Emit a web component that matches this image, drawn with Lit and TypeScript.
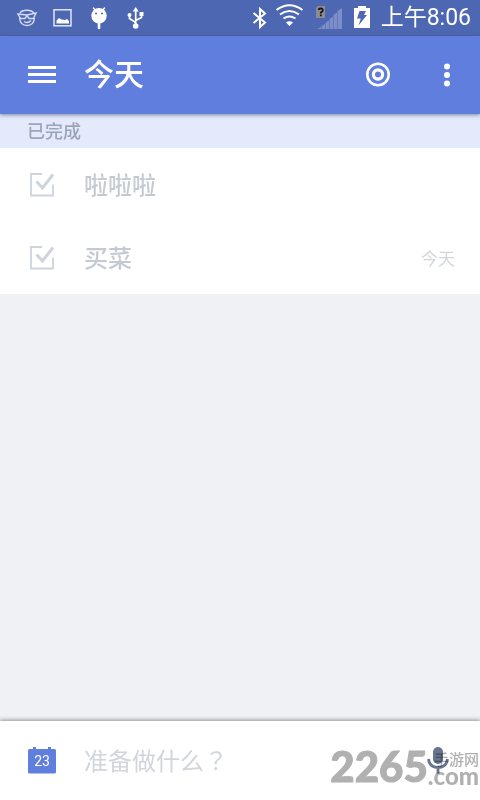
import { LitElement, html, css } from "lit";
import { customElement, property, state } from "lit/decorators.js";

interface Task {
  title: string;
  due?: string;
  done: boolean;
}

@customElement("status-bar")
export class StatusBar extends LitElement {
  static styles = css`
    :host {
      display: flex;
      align-items: center;
      justify-content: space-between;
      height: 36px;
      padding: 0 9px 0 16px;
      background: #4d67b3;
      color: #fff;
    }
    .group {
      display: flex;
      align-items: center;
    }
    .notices {
      gap: 12px;
    }
    svg {
      display: block;
      flex: none;
    }
    .signal {
      margin-left: 8px;
    }
    .battery {
      margin-left: 10px;
    }
    .clock {
      margin-left: 10px;
      font: 23px/36px Roboto, "Noto Sans CJK SC", sans-serif;
      white-space: nowrap;
    }
  `;

  render() {
    return html`
      <div class="group notices">
        <svg width="24" height="36" viewBox="0 0 24 36" fill="none" stroke="#d3dcf3" stroke-width="1.4">
          <path d="M4 13C6 9.500 15 9 18 13M3.500 18C4 23 7 25.500 11 25.500S18 23 18.500 18M8 21.500Q12 24 15 20.500" />
          <path d="M2 14L11 15L20 13L17.500 18.500H13L11 15.500L9 18.500H4.500Z" fill="#4d67b3" />
        </svg>
        <svg width="24" height="36" viewBox="0 0 24 36">
          <rect x="2" y="9.800" width="17" height="16" fill="none" stroke="#dfe6f8" stroke-width="1.500" />
          <path d="M4.500 23.500V20.500L7 18L9.500 19.500L13 20L15 19L17 21V23.500Z" fill="#fff" />
        </svg>
        <svg width="24" height="36" viewBox="0 0 24 36">
          <path d="M5.500 8L8 11M16.500 8L14 11" stroke="#fff" stroke-width="1.400" stroke-linecap="round" />
          <circle cx="11" cy="15.700" r="7.700" fill="#fff" />
          <path d="M11 22V28" stroke="#fff" stroke-width="2.600" stroke-linecap="round" />
          <circle cx="8" cy="13.500" r="1" fill="#4d67b3" />
          <circle cx="14" cy="13.500" r="1" fill="#4d67b3" />
        </svg>
        <svg width="24" height="36" viewBox="0 0 24 36" fill="none" stroke="#fff" stroke-width="1.700">
          <path d="M11.700 10V26M11.700 22.500L5.500 18.500V15M11.700 20.500L17.500 17.500V14" />
          <g fill="#fff" stroke="none">
            <path d="M8.700 11.500L11.700 7L14.700 11.500Z" />
            <circle cx="11.700" cy="26" r="2.800" />
            <circle cx="5.500" cy="15" r="2" />
            <path d="M15.500 12H19.500V16H15.500Z" />
          </g>
        </svg>
      </div>
      <div class="group">
        <svg width="16" height="36" viewBox="0 0 16 36" fill="none" stroke="#fff" stroke-width="2">
          <path d="M1.500 13L13 22.500L8 27V9L13 13.500L1.500 23" />
        </svg>
        <svg width="40" height="36" viewBox="0 0 40 36" fill="none" stroke="#fff" stroke-width="2">
          <path d="M8.500 10Q21.500 .500 34.500 10" />
          <path d="M12 14.500Q21.500 7.500 31 14.500" />
          <path d="M15.500 18.500Q21.500 14.500 27.500 18.500" />
          <path d="M18 22.500Q21.500 20 25 22.500L21.500 26Z" fill="#fff" stroke="none" />
        </svg>
        <svg class="signal" width="27" height="36" viewBox="0 0 27 36">
          <path
            d="M1 29L5 27V29ZM5.500 26L9 24V29H5.500ZM9.500 23L13 20.500V29H9.500ZM13.500 19L17 16.500V29H13.500ZM17.500 15L21 12.500V29H17.500ZM21.500 11L26 8V29H21.500Z"
            fill="#7c8dc7"
          />
          <path d="M2 6H9V18H0V8Z" fill="#8c8c90" />
          <path
            d="M2.600 10Q2.800 8.300 4.700 8.300Q6.800 8.300 6.800 10.200Q6.800 11.500 4.800 12.500V13.600M4.800 14.600V16.200"
            fill="none"
            stroke="#111"
            stroke-width="1.700"
          />
        </svg>
        <svg class="battery" width="18" height="36" viewBox="0 0 18 36">
          <path d="M1 8H5V6H13V8H17V28H1Z" fill="#fff" />
          <path d="M6.500 11H13L11 15H14L5.500 25.500L7.800 18.500H4Z" fill="#4d67b3" />
        </svg>
        <time class="clock">上午8:06</time>
      </div>
    `;
  }
}

@customElement("app-bar")
export class AppBar extends LitElement {
  @property() heading = "";

  static styles = css`
    :host {
      display: flex;
      align-items: center;
      height: 78px;
      padding: 0 9px 0 18px;
      background: #607edd;
      box-shadow: 0 1px 4px rgba(40, 50, 90, 0.55);
      color: #fff;
      position: relative;
      z-index: 1;
    }
    button {
      width: 48px;
      height: 48px;
      padding: 0;
      border: 0;
      background: none;
      flex: none;
    }
    svg {
      display: block;
      margin: auto;
    }
    h1 {
      flex: 1;
      margin: 0 0 6px 18px;
      font: 500 30px/40px "Noto Sans CJK SC", sans-serif;
    }
    .focus {
      margin-right: 21px;
    }
  `;

  render() {
    return html`
      <button aria-label="菜单">
        <svg width="28" height="20" viewBox="0 0 28 20" fill="#fff">
          <path d="M0 1H28V4H0ZM0 8H28V11H0ZM0 15H28V18H0Z" />
        </svg>
      </button>
      <h1>${this.heading}</h1>
      <button class="focus" aria-label="专注">
        <svg width="26" height="26" viewBox="0 0 26 26" fill="none" stroke="#fff">
          <circle cx="13" cy="12.500" r="10.700" stroke-width="2.600" />
          <circle cx="13" cy="12.500" r="4.600" stroke-width="3.200" />
        </svg>
      </button>
      <button aria-label="更多">
        <svg width="8" height="26" viewBox="0 0 8 26" fill="#fff">
          <circle cx="4" cy="4.500" r="3" />
          <circle cx="4" cy="13" r="3" />
          <circle cx="4" cy="21.500" r="3" />
        </svg>
      </button>
    `;
  }
}

@customElement("task-list")
export class TaskList extends LitElement {
  @property() label = "";
  @property({ attribute: false }) tasks: Task[] = [];

  static styles = css`
    :host {
      display: block;
      font-family: "Noto Sans CJK SC", sans-serif;
    }
    h2 {
      margin: 0;
      padding: 0 27px 2px;
      background: #e4eafb;
      color: #9ba5ba;
      font-size: 18px;
      font-weight: 500;
      line-height: 32px;
    }
    ul {
      margin: 0;
      padding: 0;
      list-style: none;
      background: #fff;
    }
    label {
      display: flex;
      align-items: center;
      height: 73px;
      padding: 0 25px 0 29px;
      color: #c4c9d2;
    }
    .box {
      display: grid;
      width: 26px;
      height: 26px;
      margin-right: 29px;
    }
    .box > * {
      grid-area: 1 / 1;
      margin: 0;
    }
    input {
      appearance: none;
    }
    .tick {
      visibility: hidden;
    }
    input:checked + svg .tick {
      visibility: visible;
    }
    .title {
      flex: 1;
      padding-bottom: 2px;
      font-size: 24px;
      font-weight: 500;
      line-height: 36px;
    }
    .due {
      font-size: 17px;
      color: #d3d6dc;
    }
  `;

  private toggle(task: Task) {
    task.done = !task.done;
    this.requestUpdate();
  }

  render() {
    return html`
      <h2>${this.label}</h2>
      <ul>
        ${this.tasks.map(
          (task) => html`
            <li>
              <label>
                <span class="box">
                  <input type="checkbox" .checked=${task.done} @change=${() => this.toggle(task)} />
                  <svg width="26" height="26" viewBox="0 0 26 26" fill="none" stroke="#cfd3de">
                    <path d="M13 2H2V23.500H24V12.500" stroke-width="1.800" />
                    <path class="tick" d="M7.500 9.500L13.500 16L24 2.500" stroke-width="3" />
                  </svg>
                </span>
                <span class="title">${task.title}</span>
                ${task.due ? html`<span class="due">${task.due}</span>` : null}
              </label>
            </li>
          `
        )}
      </ul>
    `;
  }
}

@customElement("quick-add")
export class QuickAdd extends LitElement {
  @property({ type: Number }) day = 1;

  static styles = css`
    :host {
      display: flex;
      align-items: center;
      height: 79px;
      padding: 0 18px;
      background: #fff;
      box-shadow: 0 -1px 4px rgba(0, 0, 0, 0.4);
      position: relative;
    }
    button {
      display: grid;
      place-items: center;
      width: 48px;
      height: 48px;
      padding: 0;
      border: 0;
      background: none;
      flex: none;
    }
    button > * {
      grid-area: 1 / 1;
    }
    .day {
      color: #fff;
      font: 14px/16px Roboto, sans-serif;
    }
    input {
      flex: 1;
      min-width: 0;
      margin: 0 0 2px 18px;
      padding: 0;
      border: 0;
      outline: 0;
      background: none;
      color: #5c6577;
      font: 24px/36px "Noto Sans CJK TC", sans-serif;
    }
    input::placeholder {
      color: #d2d5dc;
      opacity: 1;
    }
    .brand {
      position: absolute;
      right: 1px;
      bottom: 15px;
      display: flex;
      align-items: flex-end;
      color: #b0b0b0;
      font-family: Lato, sans-serif;
      font-weight: 900;
      mix-blend-mode: multiply;
      pointer-events: none;
    }
    .number {
      font-size: 42px;
      line-height: 38px;
      -webkit-text-stroke: 1px #b0b0b0;
    }
    .site {
      display: flex;
      flex-direction: column;
      align-items: flex-end;
      font-size: 24px;
      line-height: 18px;
    }
    .site-name {
      font: 500 15px/16px "Noto Sans CJK SC", sans-serif;
    }
  `;

  render() {
    return html`
      <button aria-label="选择日期">
        <svg width="28" height="28" viewBox="0 0 28 28" fill="#607edd">
          <path
            d="M5 2V.500A1.500 1.500 0 0 1 8 .500V2H20V.500A1.500 1.500 0 0 1 23 .500V2H26.500Q28 2 28 3.500V25Q28 26.500 26.500 26.500H1.500Q0 26.500 0 25V3.500Q0 2 1.500 2Z"
          />
        </svg>
        <span class="day">${this.day}</span>
      </button>
      <input type="text" aria-label="新任务" placeholder="准备做什么？" />
      <button aria-label="语音输入">
        <svg width="22" height="28" viewBox="0 0 22 28">
          <rect x="6" y="0" width="10" height="17" rx="5" fill="#67758e" />
          <path d="M1.500 12Q2.500 20.500 11 20.500T20.500 12M11 20.500V26.500" fill="none" stroke="#67758e" stroke-width="2.800" />
        </svg>
      </button>
      <div class="brand">
        <span class="number">2265</span>
        <span class="site"><span class="site-name">手游网</span><span>.com</span></span>
      </div>
    `;
  }
}

@customElement("app-root")
export class AppRoot extends LitElement {
  @state() private tasks: Task[] = [
    { title: "啦啦啦", done: true },
    { title: "买菜", due: "今天", done: true },
  ];

  static styles = css`
    :host {
      display: flex;
      flex-direction: column;
      min-height: 100vh;
      background: #f0f1f4;
    }
    main {
      flex: 1;
    }
  `;

  render() {
    return html`
      <status-bar></status-bar>
      <app-bar heading="今天"></app-bar>
      <main><task-list label="已完成" .tasks=${this.tasks}></task-list></main>
      <quick-add .day=${23}></quick-add>
    `;
  }
}
